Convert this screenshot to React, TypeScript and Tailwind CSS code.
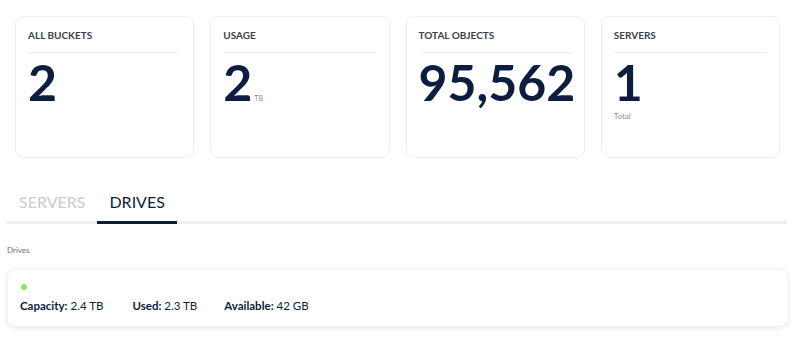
import React from 'react';

const stats = [
  { title: 'ALL BUCKETS', value: '2' },
  { title: 'USAGE', value: '2', unit: 'TB' },
  { title: 'TOTAL OBJECTS', value: '95,562' },
  { title: 'SERVERS', value: '1', note: 'Total' },
];

const StatCard = ({ title, value, unit, note }: { title: string; value: string; unit?: string; note?: string }) => (
  <div className="h-[142px] rounded-[8px] border border-[#eceef2] bg-white px-3 pt-[10px]">
    <div className="border-b border-[#f0f1f4] pb-[9px] text-[10px] font-bold leading-4 text-[#3a3f4b]">{title}</div>
    <div className="mt-[4px] flex items-baseline">
      <span className="text-[50px] font-bold leading-none text-[#0c1d40]">{value}</span>
      {unit && <span className="ml-[2px] text-[7px] text-[#8a8f99]">{unit}</span>}
    </div>
    {note && <div className="mt-[5px] text-[8px] leading-none text-[#8a8f99]">{note}</div>}
  </div>
);

export default function App() {
  return (
    <main className="min-h-screen w-[800px] bg-white pt-4 font-['Lato','Noto_Sans',sans-serif]">
      {/* stat cards */}
      <div className="ml-[15px] mr-[20px] grid grid-cols-4 gap-4">
        {stats.map((s) => (
          <StatCard key={s.title} {...s} />
        ))}
      </div>

      {/* tabs */}
      <div className="mx-[7px] mr-[13px] mt-[34px] flex border-b-[3px] border-[#eceef2]">
        <button className="-mb-[3px] border-b-[3px] border-transparent px-3 pb-[9px] text-[16px] leading-5 text-[#c9cbd0]">SERVERS</button>
        <button className="-mb-[3px] border-b-[3px] border-[#0c1d40] px-3 pb-[9px] text-[16px] leading-5 text-[#0c1d40]">DRIVES</button>
      </div>

      <div className="mx-[7px] mr-[13px]">
        <div className="mt-[20px] text-[8px] leading-3 text-[#70757f]">Drives</div>
        <div className="ml-[1px] mt-[14px] rounded-[6px] bg-white px-3 pb-[12px] pt-[14px] shadow-[0_1px_6px_rgba(0,0,0,0.12)]">
          <div className="ml-[1px] h-[6px] w-[6px] rounded-full bg-[#8fe25f]" />
          <div className="mt-[8px] flex text-[11.5px] leading-4 text-[#0c1d40]">
            <span className="mr-[29px]"><b>Capacity:</b> 2.4 TB</span>
            <span className="mr-[27px]"><b>Used:</b> 2.3 TB</span>
            <span><b>Available:</b> 42 GB</span>
          </div>
        </div>
      </div>
    </main>
  );
}
